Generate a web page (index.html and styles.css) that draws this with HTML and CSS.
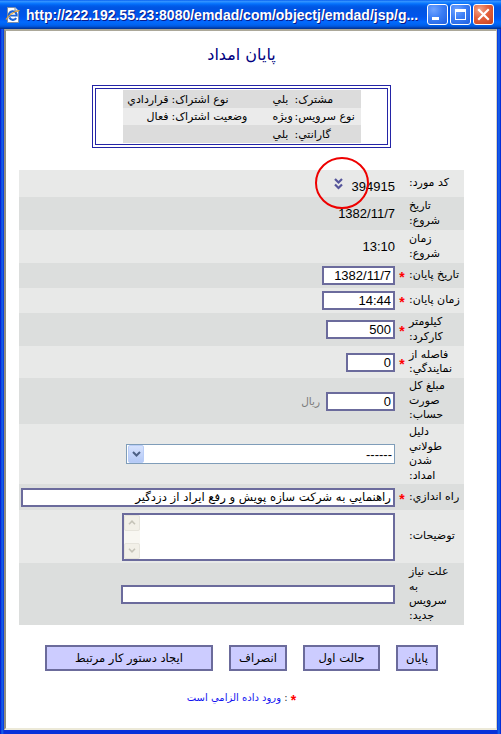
FILE: index.html
```html
<!DOCTYPE html>
<html>
<head>
<meta charset="utf-8">
<title>emdad</title>
<link rel="stylesheet" href="styles.css">
</head>
<body>
<div class="window">
  <div class="titlebar">
    <svg class="app-icon" width="16" height="16" viewBox="0 0 16 16">
      <path d="M2.5 0.5 H10 L13.5 4 V15.5 H2.5 Z" fill="#fff" stroke="#7d8ea8"/>
      <path d="M10 0.5 V4 H13.5" fill="#e4e9f2" stroke="#7d8ea8"/>
      <path d="M4.2 10.2 A4 4 0 1 1 11.6 9.4" fill="none" stroke="#1c64d6" stroke-width="2.2"/>
      <path d="M4.6 8.6 H11.4" stroke="#1c64d6" stroke-width="1.8"/>
      <path d="M11.2 11.2 A4 4 0 0 1 4.4 10.6" fill="none" stroke="#1c64d6" stroke-width="2.2"/>
      <path d="M1 12.5 C3 9 9 4 14.5 3.5" fill="none" stroke="#f0a42a" stroke-width="1.2"/>
    </svg>
    <span class="title-text">http://222.192.55.23:8080/emdad/com/objectj/emdad/jsp/g...</span>
    <div class="win-buttons">
      <span class="wbtn"><span class="min-glyph"></span></span>
      <span class="wbtn"><span class="max-glyph"></span></span>
      <span class="wbtn close">
        <svg width="13" height="13" viewBox="0 0 13 13"><path d="M2 2 L11 11 M11 2 L2 11" stroke="#fff" stroke-width="2.2" stroke-linecap="square"/></svg>
      </span>
    </div>
  </div>
  <div class="frame">
    <div class="client">
      <div class="page" dir="rtl">
        <h1 class="page-title">پايان امداد</h1>

        <div class="info-box">
          <div class="info-row">
            <span class="info-label">مشترک:</span>
            <span class="info-val1">بلي</span>
            <span class="info-label">نوع اشتراک:</span>
            <span class="info-val2">قراردادي</span>
          </div>
          <div class="info-row alt">
            <span class="info-label">نوع سرويس:</span>
            <span class="info-val1">ويژه</span>
            <span class="info-label">وضعيت اشتراک:</span>
            <span class="info-val2">فعال</span>
          </div>
          <div class="info-row">
            <span class="info-label">گارانتي:</span>
            <span class="info-val1">بلي</span>
            <span class="info-label"></span>
            <span class="info-val2"></span>
          </div>
        </div>

        <div class="form">
          <div class="row h27">
            <div class="label">کد مورد:</div>
            <div class="star"></div>
            <div class="value gap9">
              <span class="num low">394915</span>
              <svg class="chev" width="9" height="12" viewBox="0 0 9 12"><path d="M1 1 L4.5 4.5 L8 1 M1 6.5 L4.5 10 L8 6.5" fill="none" stroke="#55559a" stroke-width="2.2"/></svg>
            </div>
          </div>
          <div class="row dark h33">
            <div class="label">تاريخ<br>شروع:</div>
            <div class="star"></div>
            <div class="value"><span class="num">1382/11/7</span></div>
          </div>
          <div class="row h33">
            <div class="label">زمان<br>شروع:</div>
            <div class="star"></div>
            <div class="value"><span class="num">13:10</span></div>
          </div>
          <div class="row dark h25">
            <div class="label">تاريخ پايان:</div>
            <div class="star">*</div>
            <div class="value"><input class="field num-field w73" value="1382/11/7" readonly></div>
          </div>
          <div class="row h25">
            <div class="label">زمان پايان:</div>
            <div class="star">*</div>
            <div class="value"><input class="field num-field w73" value="14:44" readonly></div>
          </div>
          <div class="row dark h33">
            <div class="label">کيلومتر<br>کارکرد:</div>
            <div class="star">*</div>
            <div class="value"><input class="field num-field w69" value="500" readonly></div>
          </div>
          <div class="row h32">
            <div class="label">فاصله از<br>نمايندگي:</div>
            <div class="star">*</div>
            <div class="value"><input class="field num-field w49" value="0" readonly></div>
          </div>
          <div class="row dark h46">
            <div class="label">مبلغ کل<br>صورت<br>حساب:</div>
            <div class="star"></div>
            <div class="value gap6"><input class="field num-field w69" value="0" readonly><span class="unit">ريال</span></div>
          </div>
          <div class="row h60">
            <div class="label">دليل<br>طولاني<br>شدن<br>امداد:</div>
            <div class="star"></div>
            <div class="value">
              <div class="select">
                <span class="select-text">------</span>
                <span class="dd-btn"><svg width="9" height="6" viewBox="0 0 9 6"><path d="M1 1 L4.5 4.5 L8 1" fill="none" stroke="#4d6185" stroke-width="2"/></svg></span>
              </div>
            </div>
          </div>
          <div class="row dark h26">
            <div class="label">راه اندازي:</div>
            <div class="star">*</div>
            <div class="value"><input class="field text-field w374" value="راهنمايي به شرکت سازه پويش و رفع ايراد از دزدگير" readonly></div>
          </div>
          <div class="row h53">
            <div class="label">توضيحات:</div>
            <div class="star"></div>
            <div class="value">
              <div class="textarea">
                <div class="scrollbar">
                  <span class="sb-btn"><svg width="8" height="5" viewBox="0 0 8 5"><path d="M1 4.2 L4 1.2 L7 4.2" fill="none" stroke="#c5c3b8" stroke-width="1.6"/></svg></span>
                  <span class="sb-btn"><svg width="8" height="5" viewBox="0 0 8 5"><path d="M1 0.8 L4 3.8 L7 0.8" fill="none" stroke="#c5c3b8" stroke-width="1.6"/></svg></span>
                </div>
              </div>
            </div>
          </div>
          <div class="row dark h62">
            <div class="label">علت نياز<br>به<br>سرويس<br>جديد:</div>
            <div class="star"></div>
            <div class="value"><input class="field text-field w274" value="" readonly></div>
          </div>
        </div>

        <div class="buttons">
          <button class="btn bw42">پايان</button>
          <button class="btn bw77">حالت اول</button>
          <button class="btn bw58">انصراف</button>
          <button class="btn bw168">ايجاد دستور کار مرتبط</button>
        </div>

        <p class="note"><span class="note-star">*</span> <span class="note-colon">:</span> <span class="note-text">ورود داده الزامي است</span></p>

        <svg class="annot" width="56" height="54" viewBox="0 0 56 54"><ellipse cx="28" cy="27" rx="26" ry="25" fill="none" stroke="#ee0000" stroke-width="2"/></svg>
      </div>
    </div>
  </div>
</div>
</body>
</html>
```
FILE: styles.css
```css
* { box-sizing: border-box; }
html, body { margin: 0; padding: 0; }
body {
  width: 501px;
  height: 734px;
  overflow: hidden;
  background: #0831d9;
  font-family: "Liberation Sans", "DejaVu Sans", sans-serif;
}

.window {
  width: 501px;
  height: 734px;
  display: flex;
  flex-direction: column;
  background: #0a3bd9;
}

/* ---------- title bar ---------- */
.titlebar {
  height: 29px;
  flex: none;
  display: flex;
  align-items: center;
  padding: 0 7px 0 5px;
  background: linear-gradient(to bottom,
    #0058ee 0%, #3593ff 4%, #288eff 7%, #127dff 10%, #036ffc 14%,
    #0262ee 18%, #0057e5 24%, #0054e3 30%, #0055eb 56%, #005bf5 66%,
    #026afe 76%, #0062ef 86%, #0052d6 92%, #0040ab 96%, #003092 100%);
}
.app-icon { flex: none; }
.title-text {
  margin-left: 5px;
  color: #fff;
  font: bold 14px "Liberation Sans", sans-serif;
  white-space: nowrap;
  text-shadow: 1px 1px 0 #0a1a8a;
}
.win-buttons {
  margin-left: auto;
  display: flex;
  gap: 2px;
}
.wbtn {
  width: 21px;
  height: 21px;
  border: 1px solid #fff;
  border-radius: 3px;
  background: radial-gradient(circle at 30% 25%, #6fa3ff 0%, #3c7ef5 45%, #1f5fe0 100%);
  position: relative;
  display: flex;
  align-items: center;
  justify-content: center;
}
.wbtn.close {
  background: radial-gradient(circle at 30% 25%, #f3a58a 0%, #e3603c 45%, #c8401c 100%);
}
.min-glyph {
  position: absolute;
  left: 4px;
  bottom: 4px;
  width: 7px;
  height: 3px;
  background: #fff;
}
.max-glyph {
  width: 11px;
  height: 11px;
  border: 1px solid #fff;
  border-top-width: 3px;
}

/* ---------- frame & client ---------- */
.frame {
  flex: 1;
  display: flex;
  padding: 0 4px 4px;
  background: linear-gradient(to right, #0019cf 0, #0831d9 1px, #166aee 2px, #0831d9 4px, #0831d9 497px, #166aee 499px, #0019cf 501px);
}
.client {
  flex: 1;
  background: #fff;
  border-left: 2px solid #8f8c80;
  border-top: 2px solid #aca899;
  border-right: 1px solid #d6d3c4;
  border-bottom: 2px solid #ece9d8;
}

.page {
  display: flow-root;
  position: relative;
  width: 445px;
  margin-left: 13px;
  font-family: "DejaVu Sans", sans-serif;
  font-size: 11px;
  color: #000;
}

.page-title {
  margin: 14px 0 0;
  font: normal 16px/20px "DejaVu Sans", sans-serif;
  color: #000080;
  text-align: center;
}

/* ---------- info box ---------- */
.info-box {
  width: 299px;
  margin: 20px auto 0;
  border: 4px double #2424a6;
  padding: 1px 0;
}
.info-row {
  width: 238px;
  height: 18px;
  margin: 0 auto;
  display: grid;
  grid-template-columns: 67px 23px 100px 48px;
  align-items: center;
  background: #dcdcdc;
  font-size: 11px;
  white-space: nowrap;
}
.info-row.alt { height: 17px; background: #ebebeb; }
.info-label { text-align: left; padding-left: 1px; }
.info-val1 { text-align: left; padding-left: 2px; }
.info-val2 { text-align: right; padding-right: 2px; }

/* ---------- form table ---------- */
.form {
  margin-top: 22px;
}
.row {
  display: grid;
  grid-template-columns: 57px 10px 1fr;
  align-items: center;
  background: #e8e9e8;
}
.row.dark { background: #dcdedd; }
.h25 { height: 25px; }
.h26 { height: 26px; }
.h27 { height: 27px; }
.h32 { height: 32px; }
.h33 { height: 33px; }
.h46 { height: 46px; }
.h53 { height: 53px; }
.h60 { height: 60px; }
.h62 { height: 62px; }

.label {
  text-align: left;
  padding-left: 2px;
  font-size: 11px;
  line-height: 14.5px;
  white-space: nowrap;
}
.star {
  color: #ff0000;
  text-align: center;
  font: bold 14px "Liberation Sans", sans-serif;
  line-height: 14px;
  padding-top: 3px;
}
.value {
  display: flex;
  align-items: center;
  justify-content: flex-start;
  padding-right: 2px;
}
.gap9 { gap: 9px; }
.gap6 { gap: 6px; }

.num {
  font: 13px "Liberation Sans", sans-serif;
  direction: ltr;
  unicode-bidi: isolate;
}
.num.low { padding-top: 6px; }
.chev { margin-top: 1px; }

.field {
  height: 19px;
  border: 2px solid #6b6b9c;
  background: #fff;
  padding: 0 2px;
  margin: 0;
  outline: none;
  text-align: right;
  color: #000;
}
.num-field {
  font: 13px "Liberation Sans", sans-serif;
  direction: ltr;
}
.text-field {
  font: 11.7px "DejaVu Sans", sans-serif;
  direction: rtl;
}
.w49 { width: 49px; }
.w69 { width: 69px; }
.w73 { width: 73px; }
.w274 { width: 274px; }
.w374 { width: 374px; }

.unit {
  color: #7b7b7b;
  font-size: 10.5px;
}

.select {
  width: 269px;
  height: 20px;
  border: 1px solid #7f9db9;
  background: #fff;
  display: flex;
  align-items: center;
  justify-content: space-between;
  padding: 0 0 0 1px;
}
.select-text {
  font: 13px "Liberation Sans", sans-serif;
  padding-right: 2px;
}
.dd-btn {
  width: 16px;
  height: 18px;
  border: 1px solid #b9cdf7;
  border-radius: 2px;
  background: linear-gradient(to bottom, #d6e2fd, #b4c9f6);
  display: flex;
  align-items: center;
  justify-content: center;
}

.textarea {
  width: 273px;
  height: 48px;
  border: 2px solid #6b6b9c;
  background: #fff;
  display: flex;
  justify-content: flex-end;
}
.scrollbar {
  width: 16px;
  display: flex;
  flex-direction: column;
  justify-content: space-between;
  background: #f8f7f2;
}
.sb-btn {
  height: 16px;
  border: 1px solid #e6e4dc;
  border-radius: 2px;
  background: #f2f0e8;
  display: flex;
  align-items: center;
  justify-content: center;
}

/* ---------- buttons ---------- */
.buttons {
  display: flex;
  justify-content: center;
  gap: 16px;
  margin-top: 20px;
}
.btn {
  height: 26px;
  border: 2px solid #6b6b9b;
  background: #ccccff;
  font: 11.5px "DejaVu Sans", sans-serif;
  color: #000;
  padding: 0;
  margin: 0;
}
.bw42 { width: 42px; }
.bw58 { width: 58px; }
.bw77 { width: 77px; }
.bw168 { width: 168px; }

.note {
  margin: 19px 0 0;
  text-align: center;
  font-size: 10px;
  line-height: 16px;
}
.note-star {
  color: #ff0000;
  font: bold 14px "Liberation Sans", sans-serif;
  vertical-align: -4px;
}
.note-colon { color: #333; }
.note-text { color: #1414f0; }

.annot {
  position: absolute;
  left: 295px;
  top: 125px;
}
```
